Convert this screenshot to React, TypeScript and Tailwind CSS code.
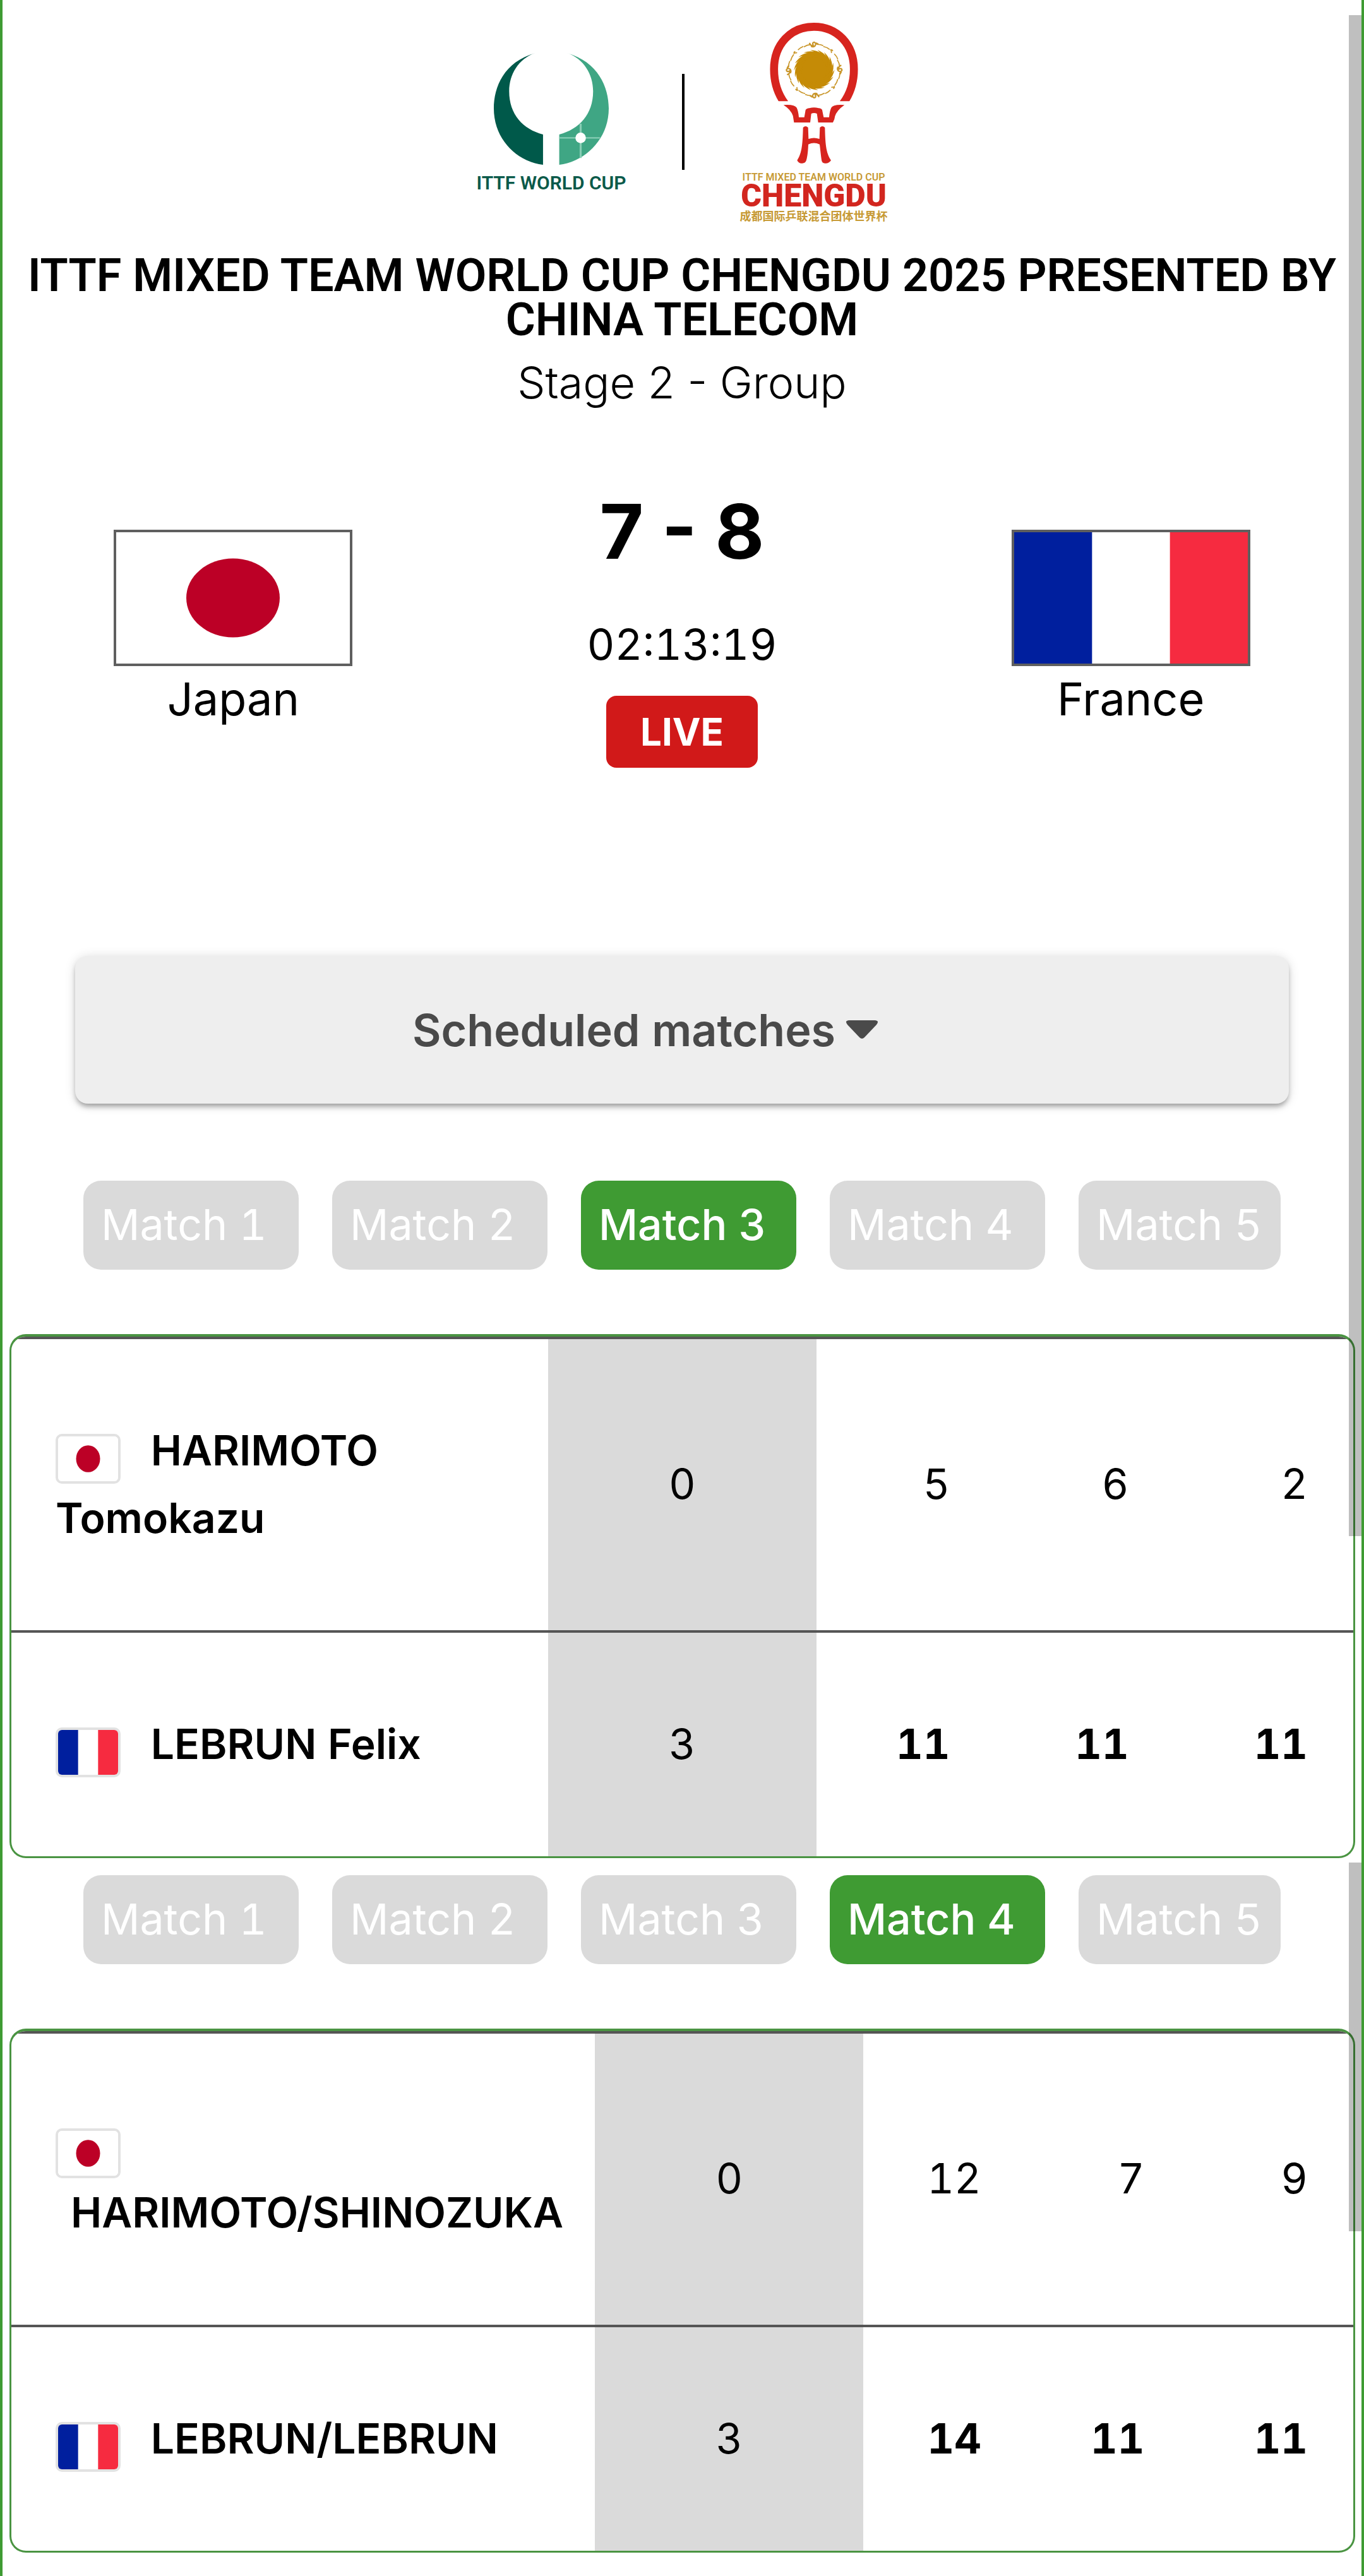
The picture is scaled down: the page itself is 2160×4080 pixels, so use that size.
import { Fragment } from "react";
import { clsx } from "clsx";

type Country = "JPN" | "FRA";

interface Player {
  country: Country;
  names: string[];
  games: number;
  points: number[];
  winner: boolean;
}

interface Match {
  active: number;
  nameCol: string;
  gamesCol: string;
  players: Player[];
}

const matches: Match[] = [
  {
    active: 3,
    nameCol: "w-[40%]",
    gamesCol: "w-[20%]",
    players: [
      { country: "JPN", names: ["HARIMOTO", "Tomokazu"], games: 0, points: [5, 6, 2], winner: false },
      { country: "FRA", names: ["LEBRUN", "Felix"], games: 3, points: [11, 11, 11], winner: true },
    ],
  },
  {
    active: 4,
    nameCol: "w-[43.5%]",
    gamesCol: "w-[20%]",
    players: [
      { country: "JPN", names: ["HARIMOTO/SHINOZUKA"], games: 0, points: [12, 7, 9], winner: false },
      { country: "FRA", names: ["LEBRUN/LEBRUN"], games: 3, points: [14, 11, 11], winner: true },
    ],
  },
];

function FlagArt({ country }: { country: Country }) {
  if (country === "JPN") {
    return (
      <svg viewBox="0 0 300 200" preserveAspectRatio="none" className="block h-full w-full" role="img" aria-label="Flag of Japan">
        <rect width="300" height="200" fill="#fff" />
        <circle cx="150" cy="100" r="60" fill="#bc0026" />
      </svg>
    );
  }
  return (
    <svg viewBox="0 0 300 200" preserveAspectRatio="none" className="block h-full w-full" role="img" aria-label="Flag of France">
      <rect width="300" height="200" fill="#fff" />
      <rect width="100" height="200" fill="#001f9e" />
      <rect x="200" width="100" height="200" fill="#f62b40" />
    </svg>
  );
}

function WorldCupLogo() {
  return (
    <div className="flex flex-col items-center gap-4">
      <svg viewBox="135 188 397 532" preserveAspectRatio="none" className="h-[177px] w-[182px]" aria-hidden="true">
        <path d="M278 188C170 230 135 350 135 452C135 600 215 705 305 720V576C235 550 188 480 188 370C188 290 220 215 278 188Z" fill="#00594a" />
        <path d="M388 188C495 230 532 350 532 452C532 600 450 705 361 720V576C430 550 478 480 478 370C478 290 446 215 388 188Z" fill="#3fa684" />
        <path d="M361 592H502M435 525V688" stroke="#86cdb4" strokeWidth="7" fill="none" />
        <ellipse cx="435" cy="592" rx="18" ry="25" fill="#fff" />
      </svg>
      <span className="font-[Roboto,sans-serif] text-[30px] leading-[25px] font-semibold whitespace-nowrap text-[#0b5a4a]">ITTF WORLD CUP</span>
    </div>
  );
}

const rays = Array.from({ length: 18 }, (_, i) => i * 20);
const knots = Array.from({ length: 8 }, (_, i) => i * 45);

function ChengduLogo() {
  return (
    <div className="flex flex-col items-center">
      <svg viewBox="200 47 420 670" className="h-[223px] w-[140px]" aria-hidden="true">
        <clipPath id="ring-cut">
          <rect x="190" y="30" width="440" height="390" />
        </clipPath>
        <path
          d="M272 432C236 384 220 330 220 268C220 150 300 66 410 66C520 66 600 150 600 268C600 330 584 384 548 432"
          fill="none"
          stroke="#d7241e"
          strokeWidth="38"
          clipPath="url(#ring-cut)"
        />
        <circle cx="411" cy="272" r="70" fill="#c58b06" />
        {rays.map((a) => (
          <path key={a} d="M392 177Q456 178 484 244L456 236Q440 194 392 177Z" fill="#c58b06" transform={`rotate(${a} 411 272)`} />
        ))}
        {knots.map((a) => (
          <g key={a} transform={`rotate(${a} 411 272)`} fill="none" stroke="#c9962a">
            <path d="M362 162Q378 152 394 151M424 150Q442 150 454 156" strokeWidth="5" />
            {a % 90 === 0 ? (
              <path d="M388 143Q396 160 406 154Q400 140 412 140Q424 146 414 158Q404 164 396 158M420 142Q424 150 432 148" strokeWidth="7" />
            ) : (
              <path d="M396 150L410 144M402 142Q402 152 412 156" strokeWidth="5" />
            )}
          </g>
        ))}
        <path
          d="M265 438Q318 434 328 452Q336 470 338 497H364L370 462Q374 454 388 453Q410 448 432 453Q446 454 449 462L456 497H482Q484 470 492 452Q500 434 555 438Q518 464 510 492Q508 510 500 522H430L424 480Q410 474 397 480L392 522H315L310 490Q300 460 265 438Z"
          fill="#d7241e"
        />
        <path
          d="M358 546Q370 534 382 546L384 600Q410 590 436 600L438 546Q450 534 462 546C464 620 466 665 491 702Q480 718 462 716Q448 716 446 700C442 670 440 650 437 626Q410 612 383 626C382 650 380 680 374 700Q370 716 354 716Q338 718 330 702C354 665 356 620 358 546Z"
          fill="#d7241e"
        />
      </svg>
      <span className="mt-4 font-[Roboto,sans-serif] text-[16px] leading-3 font-semibold whitespace-nowrap text-[#c79a35]">ITTF MIXED TEAM WORLD CUP</span>
      <span className="mt-1.5 font-[Roboto,sans-serif] text-[50px] leading-[34px] font-black text-[#d2261f]">CHENGDU</span>
      <span className="mt-1.5 font-['Noto_Sans_CJK_SC',sans-serif] text-[18px] leading-4 font-bold whitespace-nowrap text-[#c79a35]" lang="zh">
        成都国际乒联混合团体世界杯
      </span>
    </div>
  );
}

function Team({ country, name }: { country: Country; name: string }) {
  return (
    <div className="mt-[57px] flex flex-col items-center gap-2.5">
      <div className="h-[216px] w-[378px] border-4 border-[#5f5f5f]">
        <FlagArt country={country} />
      </div>
      <span className="text-[72px] leading-[84px]">{name}</span>
    </div>
  );
}

function MatchTabs({ active }: { active: number }) {
  return (
    <nav className="mx-32 grid grid-cols-[341fr_341fr_341fr_341fr_320fr] gap-[53px]" aria-label="Matches">
      {[1, 2, 3, 4, 5].map((n) => (
        <button
          key={n}
          type="button"
          aria-pressed={n === active}
          className={clsx(
            "h-[141px] rounded-[28px] pb-1 pl-7 text-left text-[68px] whitespace-nowrap text-white",
            n === active ? "bg-[#3f9b33] font-medium" : "bg-[#dadada]",
          )}
        >
          Match {n}
        </button>
      ))}
    </nav>
  );
}

function ScoreCard({ match }: { match: Match }) {
  return (
    <div className="mt-[102px] mr-[10px] ml-[11px] overflow-hidden rounded-[26px] border-[3px] border-t-4 border-[#4a9442]">
      <table className="w-full table-fixed border-collapse text-[66px] leading-[107px]">
        <colgroup>
          <col className={match.nameCol} />
          <col className={match.gamesCol} />
          <col />
          <col />
          <col />
        </colgroup>
        <tbody>
          {match.players.map((p) => (
            <tr key={p.country} className="border-t-4 border-[#555555]">
              <th scope="row" className="pt-[123px] pb-[124px] pl-[70px] text-left font-semibold">
                <span className="mr-1.5 inline-block h-[79px] w-[103px] overflow-hidden rounded-[10px] border-4 border-[#e2e2e2] align-[-29px]">
                  <FlagArt country={p.country} />
                </span>{" "}
                {p.names.map((word, i) => (
                  <Fragment key={word}>
                    <span className={clsx("whitespace-nowrap", i === 0 && "pl-6")}>{word}</span>{" "}
                  </Fragment>
                ))}
              </th>
              <td className="bg-[#dadada] pb-0.5 text-center">{p.games}</td>
              {p.points.map((pt, i) => (
                <td key={i} className={clsx("pr-[72px] pb-0.5 text-right", p.winner && "font-bold")}>
                  {pt}
                </td>
              ))}
            </tr>
          ))}
        </tbody>
      </table>
    </div>
  );
}

export default function App() {
  return (
    <main className="min-h-screen border-x-4 border-[#3f9b33] bg-white font-[Inter,sans-serif] text-black tabular-nums">
      <section className="relative">
        <header className="pt-9 text-center">
          <div className="flex items-center justify-center gap-[88px]">
            <WorldCupLogo />
            <div className="h-[152px] w-1 bg-black" />
            <ChengduLogo />
          </div>
          <h1 className="mt-[53px] px-6 font-[Roboto,sans-serif] text-[72px] leading-[70px] font-semibold">
            ITTF MIXED TEAM WORLD CUP CHENGDU 2025 PRESENTED BY CHINA TELECOM
          </h1>
          <p className="mt-[22px] text-[70px] leading-[84px] font-light proportional-nums">Stage 2 - Group</p>
        </header>

        <div className="mt-[134px] grid grid-cols-3 px-[10px]">
          <Team country="JPN" name="Japan" />
          <div className="flex flex-col items-center">
            <div className="text-[120px] leading-[120px] font-bold proportional-nums">7 - 8</div>
            <time className="mt-[78px] text-[68px] leading-20">02:13:19</time>
            <span className="mt-[42px] rounded-2xl bg-[#d11919] px-[54px] text-[60px] leading-[114px] font-bold text-white">LIVE</span>
          </div>
          <Team country="FRA" name="France" />
        </div>

        <div className="mt-[298px] px-[115px]">
          <button
            type="button"
            className="flex h-[234px] w-full items-center justify-center gap-4 rounded-[20px] bg-[#eeeeee] pr-[116px] text-[70px] font-semibold text-[#4a4a4a] shadow-[0_6px_8px_-2px_rgba(0,0,0,0.35),0_2px_18px_rgba(0,0,0,0.14)]"
          >
            Scheduled matches
            <svg viewBox="0 0 52 30" className="h-[30px] w-[52px]" aria-hidden="true">
              <path d="M5 0H47Q54 1 49 7L30 27Q26 31 22 27L3 7Q-2 1 5 0Z" fill="#4a4a4a" />
            </svg>
          </button>
        </div>

        <div className="mt-[122px]">
          <MatchTabs active={matches[0].active} />
        </div>
        <ScoreCard match={matches[0]} />
        <div className="absolute top-6 right-0 bottom-[510px] w-5 bg-black/25" />
      </section>

      <section className="relative pt-[27px] pb-9">
        <MatchTabs active={matches[1].active} />
        <ScoreCard match={matches[1]} />
        <div className="absolute top-[7px] right-0 h-[584px] w-5 bg-black/25" />
      </section>
    </main>
  );
}
